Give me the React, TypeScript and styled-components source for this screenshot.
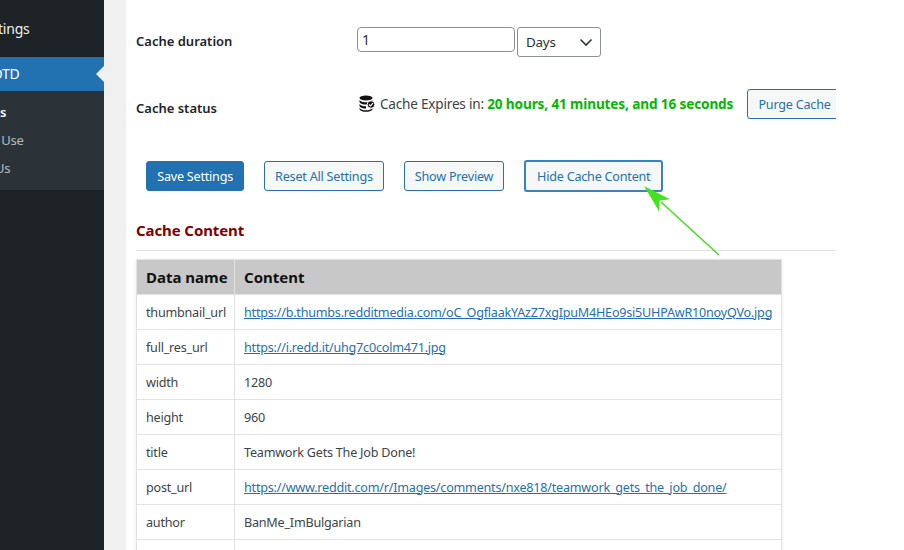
import styled, { createGlobalStyle } from "styled-components";

const GlobalStyle = createGlobalStyle`
  html, body {
    margin: 0;
    height: 100%;
    background: #fff;
    overflow: hidden;
  }
  body {
    font-family: "Noto Sans", "Open Sans", sans-serif;
    font-size: 12.6px;
    letter-spacing: -0.22px;
    color: #3c434a;
  }
`;

const Shell = styled.div`
  position: relative;
  display: flex;
  width: 904px;
  height: 550px;
  overflow: hidden;
`;

const Sidebar = styled.nav`
  flex: 0 0 104px;
  background: #1d2327;
  overflow: hidden;
  color: #f0f0f1;
  font-size: 14px;
`;

const SidebarInner = styled.div`
  width: 160px;
  margin-left: -56px;
  padding-top: 12px;
`;

const MenuItem = styled.div<{ $current?: boolean }>`
  position: relative;
  height: 34px;
  line-height: 34px;
  padding-left: ${(p) => (p.$current ? "31px" : "34px")};
  margin-top: ${(p) => (p.$current ? "11px" : "0")};
  background: ${(p) => (p.$current ? "#2271b1" : "transparent")};
  color: ${(p) => (p.$current ? "#fff" : "#f0f0f1")};
`;

const CurrentNotch = styled.span`
  position: absolute;
  right: 0;
  top: 9px;
  border: 8px solid transparent;
  border-right-color: #f0f0f1;
  border-left-width: 0;
`;

const SubMenu = styled.div`
  background: #2c3338;
  padding: 7px 0 8px 12px;
  height: 99px;
  box-sizing: border-box;
  font-size: 13px;
`;

const SubItem = styled.div<{ $current?: boolean }>`
  height: 28px;
  line-height: 28px;
  color: ${(p) => (p.$current ? "#fff" : "rgba(240, 246, 252, 0.7)")};
  font-weight: ${(p) => (p.$current ? 600 : 400)};
`;

const Gutter = styled.div`
  flex: 0 0 22px;
  background: #f0f0f1;
`;

const Panel = styled.main`
  flex: 0 0 710px;
  overflow: hidden;
  padding-left: 10px;
  box-sizing: border-box;
`;

const FormRow = styled.div<{ $height: number }>`
  display: grid;
  grid-template-columns: 221px 1fr;
  height: ${(p) => p.$height}px;
`;

const Label = styled.div<{ $top: number }>`
  padding-top: ${(p) => p.$top}px;
  font-size: 13px;
  letter-spacing: 0;
  font-weight: 600;
  color: #1d2327;
  line-height: 20px;
`;

const Field = styled.div<{ $top: number }>`
  display: flex;
  align-items: flex-start;
  padding-top: ${(p) => p.$top}px;
  white-space: nowrap;
`;

const NumberInput = styled.input`
  width: 158px;
  height: 25px;
  box-sizing: border-box;
  border: 1px solid #8c8f94;
  border-radius: 4px;
  padding: 0 4px;
  font: inherit;
  font-size: 14px;
  color: #2c3338;
  background: #fff;
`;

const SelectBox = styled.div`
  display: flex;
  align-items: center;
  justify-content: space-between;
  width: 84px;
  height: 30px;
  margin-left: 2px;
  padding: 0 7px 0 8px;
  box-sizing: border-box;
  border: 1px solid #8c8f94;
  border-radius: 3px;
  font-size: 13.4px;
  line-height: 28px;
  color: #2c3338;
`;

const CacheStatus = styled.div`
  display: flex;
  align-items: center;
  gap: 5px;
  height: 20px;
  margin: 4px 14px 0 2px;
  font-size: 13.6px;
`;

const Remaining = styled.strong`
  color: #00b900;
  font-weight: 700;
  letter-spacing: -0.13px;
`;

const Button = styled.button<{ $primary?: boolean; $focus?: boolean }>`
  height: ${(p) => (p.$focus ? "32px" : "30px")};
  margin: ${(p) => (p.$focus ? "-1px 0 0" : "0")};
  padding: 0 ${(p) => (p.$focus ? "11px" : "10.2px")};
  box-sizing: border-box;
  border: ${(p) => (p.$focus ? "2px solid #3582c4" : "1px solid #2271b1")};
  border-radius: 3px;
  background: ${(p) => (p.$primary ? "#2271b1" : "#f6f7f7")};
  color: ${(p) => (p.$primary ? "#fff" : "#2271b1")};
  font: inherit;
  letter-spacing: inherit;
  white-space: nowrap;
`;

const Actions = styled.div`
  display: flex;
  align-items: flex-start;
  gap: 19.7px;
  height: 30px;
  margin: 0 0 0 10px;
`;

const SectionTitle = styled.h3`
  margin: 0;
  padding: 29px 0 9px;
  border-bottom: 1px solid #e0e0e0;
  font-size: 15px;
  line-height: 21px;
  letter-spacing: -0.1px;
  font-weight: 700;
  color: #800000;
`;

const DataTable = styled.table`
  width: 646px;
  margin-top: 8px;
  table-layout: fixed;
  border-collapse: collapse;
  background: #fff;
  box-shadow: 0 1px 4px rgba(0, 0, 0, 0.08);

  th, td {
    border: 1px solid #e2e2e2;
    padding: 0 4px 0 9px;
    text-align: left;
    white-space: nowrap;
  }
  th {
    height: 34px;
    background: #c8c8c8;
    color: #111;
    font-size: 15px;
    letter-spacing: 0;
    font-weight: 700;
  }
  th:first-child {
    width: 98px;
    box-sizing: border-box;
  }
  td {
    height: 34px;
    color: #3c434a;
  }
  a {
    color: #2271b1;
  }
`;

const Arrow = styled.svg`
  position: absolute;
  left: 640px;
  top: 180px;
`;

const rows: [string, string, boolean][] = [
  ["thumbnail_url", "https://b.thumbs.redditmedia.com/oC_OgflaakYAzZ7xgIpuM4HEo9si5UHPAwR10noyQVo.jpg", true],
  ["full_res_url", "https://i.redd.it/uhg7c0colm471.jpg", true],
  ["width", "1280", false],
  ["height", "960", false],
  ["title", "Teamwork Gets The Job Done!", false],
  ["post_url", "https://www.reddit.com/r/Images/comments/nxe818/teamwork_gets_the_job_done/", true],
  ["author", "BanMe_ImBulgarian", false],
  ["", "", false],
];

export default function App() {
  return (
    <>
      <GlobalStyle />
      <Shell>
        <Sidebar>
          <SidebarInner>
            <MenuItem>Settings</MenuItem>
            <MenuItem $current>
              RPOTD
              <CurrentNotch />
            </MenuItem>
            <SubMenu>
              <SubItem $current>Settings</SubItem>
              <SubItem>How to Use</SubItem>
              <SubItem>About Us</SubItem>
            </SubMenu>
          </SidebarInner>
        </Sidebar>
        <Gutter />
        <Panel>
          <FormRow $height={71}>
            <Label $top={31}>Cache duration</Label>
            <Field $top={27}>
              <NumberInput defaultValue="1" />
              <SelectBox>
                Days
                <svg width="14" height="14" viewBox="0 0 14 14" fill="none" stroke="#2c3338" strokeWidth="1.6">
                  <path d="M1.5 4.5 7 10l5.5-5.5" />
                </svg>
              </SelectBox>
            </Field>
          </FormRow>
          <FormRow $height={90}>
            <Label $top={27}>Cache status</Label>
            <Field $top={18}>
              <CacheStatus>
                <svg width="16" height="17" viewBox="0 0 16 17" fill="#111">
                  <ellipse cx="7" cy="3" rx="6.5" ry="2.6" />
                  <path d="M.5 5c1 1.7 3.6 2.3 6.5 2.3S12.5 6.7 13.5 5v2.2c-1 1.7-3.6 2.4-6.5 2.4S1.5 8.9.5 7.2z" />
                  <path d="M.5 9c1 1.7 3.6 2.3 6.5 2.3v2.3c-2.9 0-5.5-.7-6.5-2.4z" />
                  <path d="M.5 13c1 1.7 3.6 2.3 6.5 2.3S12.5 14.7 13.5 13v1.5C12.5 16 9.9 16.8 7 16.8S1.5 16 .5 14.5z" />
                  <circle cx="12" cy="9.5" r="3.8" fill="#111" stroke="#fff" />
                  <path d="m10 9.5 1.5 1.5 2.5-2.8" fill="none" stroke="#fff" strokeWidth="1.2" />
                </svg>
                <span>
                  Cache Expires in: <Remaining>20 hours, 41 minutes, and 16 seconds</Remaining>
                </span>
              </CacheStatus>
              <Button>Purge Cache</Button>
            </Field>
          </FormRow>
          <Actions>
            <Button $primary>Save Settings</Button>
            <Button>Reset All Settings</Button>
            <Button>Show Preview</Button>
            <Button $focus>Hide Cache Content</Button>
          </Actions>
          <SectionTitle>Cache Content</SectionTitle>
          <DataTable>
            <thead>
              <tr>
                <th>Data name</th>
                <th>Content</th>
              </tr>
            </thead>
            <tbody>
              {rows.map(([name, value, isLink], i) => (
                <tr key={i}>
                  <td>{name}</td>
                  <td>{isLink ? <a href="#">{value}</a> : value}</td>
                </tr>
              ))}
            </tbody>
          </DataTable>
        </Panel>
        <Arrow width="90" height="85" viewBox="0 0 90 85">
          <path d="M79 75 21 22" stroke="#45dc1e" strokeWidth="1.5" fill="none" />
          <path d="M4 6 30 19.3 19.3 20.7 19.3 31.7z" fill="#45e21e" />
        </Arrow>
      </Shell>
    </>
  );
}
